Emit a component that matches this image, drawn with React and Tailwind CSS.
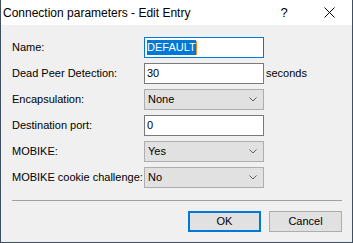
import React from 'react'

const FONT = { fontFamily: '"Liberation Sans", Arial, sans-serif' }

function Chevron() {
  return (
    <svg width="8" height="5" viewBox="0 0 8 5" className="shrink-0">
      <path d="M0.5 0.5 L4 4 L7.5 0.5" fill="none" stroke="#606060" strokeWidth="1" />
    </svg>
  )
}

function TextBox({ children, focused }) {
  return (
    <div
      className={`w-[120px] h-[21px] bg-white border flex items-center pl-[2px] text-[11px] text-black ${
        focused ? 'border-[#0078d7]' : 'border-[#7a7a7a]'
      }`}
    >
      {children}
    </div>
  )
}

function Select({ value }) {
  return (
    <div className="w-[120px] h-[21px] bg-[#e1e1e1] border border-[#adadad] flex items-center justify-between pl-[3px] pr-[6px] text-[11px] text-black">
      <span>{value}</span>
      <Chevron />
    </div>
  )
}

function Row({ label, children }) {
  return (
    <div className="flex items-center h-[21px]">
      <div className="w-[132px] text-[11px] text-black whitespace-nowrap">{label}</div>
      {children}
    </div>
  )
}

export default function App() {
  return (
    <div style={FONT} className="w-[353px] h-[243px] flex flex-col border-x border-b border-[#3c4f63] bg-[#f0f0f0]">
      <div className="h-[25px] bg-white flex items-center shrink-0">
        <span className="pl-[2px] text-[12px] text-black flex-1">Connection parameters - Edit Entry</span>
        <div className="w-[46px] h-[25px] flex items-center justify-center text-[13px] text-black">?</div>
        <div className="w-[45px] h-[25px] flex items-center justify-center">
          <svg width="11" height="11" viewBox="0 0 11 11">
            <path d="M0.5 0.5 L10.5 10.5 M10.5 0.5 L0.5 10.5" stroke="#000" strokeWidth="1" fill="none" />
          </svg>
        </div>
      </div>

      <div className="flex-1 flex flex-col pt-[12px] pl-[11px] pr-[10px]">
        <div className="flex flex-col gap-[5px]">
          <Row label="Name:">
            <TextBox focused>
              <span className="bg-[#0078d7] text-white leading-[15px]">DEFAULT</span>
              <span className="w-[1px] h-[14px] bg-[#f08a24]" />
            </TextBox>
          </Row>
          <Row label="Dead Peer Detection:">
            <TextBox>30</TextBox>
            <span className="ml-[2px] text-[11px] text-black">seconds</span>
          </Row>
          <Row label="Encapsulation:">
            <Select value="None" />
          </Row>
          <Row label="Destination port:">
            <TextBox>0</TextBox>
          </Row>
          <Row label="MOBIKE:">
            <Select value="Yes" />
          </Row>
          <Row label="MOBIKE cookie challenge:">
            <Select value="No" />
          </Row>
        </div>

        <div className="mt-[12px] h-[1px] bg-[#a0a0a0]" />

        <div className="mt-[10px] flex justify-end gap-[8px]">
          <button className="w-[73px] h-[21px] bg-[#e1e1e1] border-2 border-[#0078d7] text-[11px] text-black flex items-center justify-center">
            OK
          </button>
          <button className="w-[73px] h-[21px] bg-[#e1e1e1] border border-[#adadad] text-[11px] text-black flex items-center justify-center">
            Cancel
          </button>
        </div>
      </div>
    </div>
  )
}
